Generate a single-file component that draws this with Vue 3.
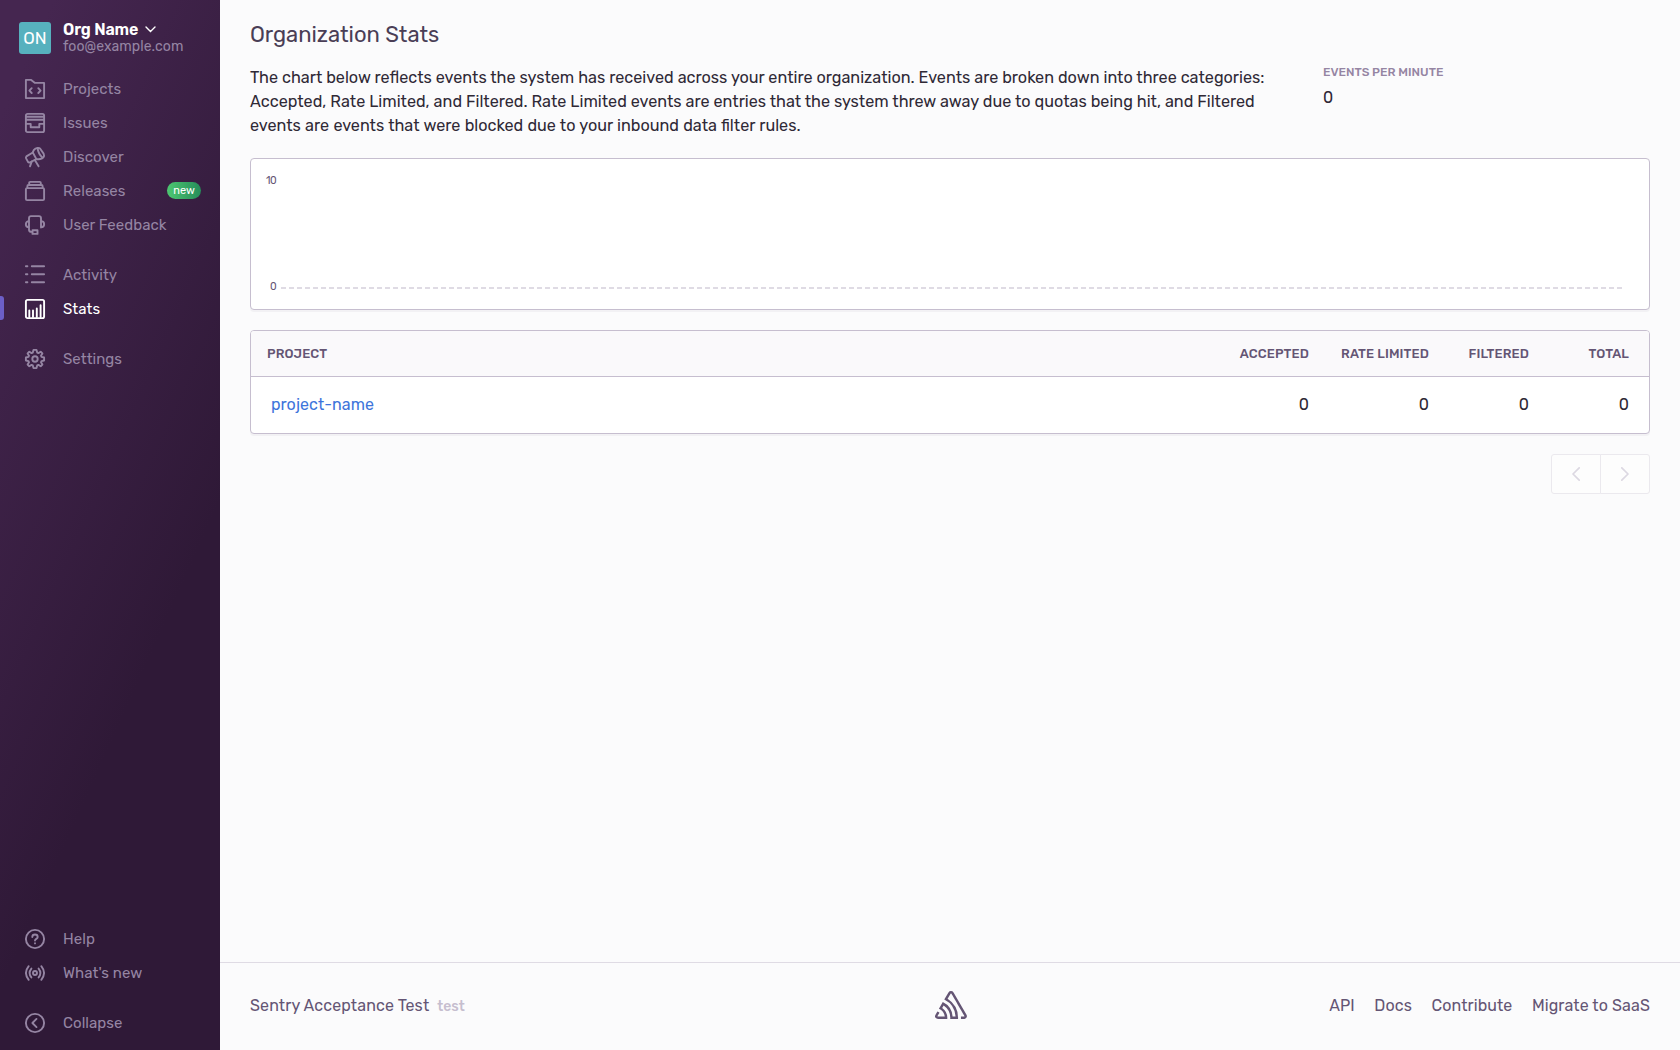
<script setup>
const primary = [
  { id: 'projects', label: 'Projects' },
  { id: 'issues', label: 'Issues' },
  { id: 'discover', label: 'Discover' },
  { id: 'releases', label: 'Releases', badge: 'new' },
  { id: 'feedback', label: 'User Feedback' },
]
const secondary = [
  { id: 'activity', label: 'Activity' },
  { id: 'stats', label: 'Stats', active: true },
]
const settings = [{ id: 'settings', label: 'Settings' }]
const support = [
  { id: 'help', label: 'Help' },
  { id: 'whatsnew', label: "What's new" },
]
const collapse = [{ id: 'collapse', label: 'Collapse' }]
const topGroups = [primary, secondary, settings]
const bottomGroups = [support, collapse]

const icons = {
  projects:
    '<path d="M.9.9H6.2L10 3.9H19.1V19.1H.9Z"/><path d="M6.7 9.2 4.4 11.6 6.7 14M13.3 9.2l2.3 2.4L13.3 14"/>',
  issues:
    '<rect x=".9" y=".9" width="18.2" height="18.2" rx="1.6"/><path d="M.9 3.7H19.1M.9 6.7H19.1M.9 10.9H5.7V14.3H14.3V10.9H19.1"/>',
  discover:
    '<path d="M1.4 9.4 7.8 5.5 11.4 12.1 4.7 15.5Q3.6 15.8 3 14.9L1.1 11.4Q.6 10.2 1.4 9.4Z"/><path d="M7.8 5.5Q8.4 2.6 10.4 1.6L12.6.9Q14.2.6 15.2 1.7L18.6 6.6Q19.6 8.6 18.5 10.2L17 11.4Q14.8 12.7 11.4 12.1M12.6.9Q13 6.4 17.6 10.9M6.8 14.4 5 19.3M9.8 13 13.6 19.3"/>',
  releases:
    '<rect x=".9" y="7.1" width="18.2" height="12" rx="1.2"/><path d="M2.4 7V5Q2.4 4 3.4 4H16.6Q17.6 4 17.6 5V7M4.2 4V1.9Q4.2.9 5.2.9H14.8Q15.8.9 15.8 1.9V4"/>',
  feedback:
    '<path d="M4 12.6V3.3Q4 1.1 6 1.1H14Q16 1.1 16 3.3V12.6M4 6.1C-.2 6.1-.2 12.3 4 12.3ZM16 6.1C20.2 6.1 20.2 12.3 16 12.3ZM4 12.3V14.5Q4 16.9 6.3 16.9H7.3"/><rect x="7.5" y="15.3" width="5" height="3.6"/>',
  activity: '<path d="M.9 1.2H2.4M6.8 1.2H19.1M.9 9.2H2.4M6.8 9.2H19.1M.9 17.2H2.4M6.8 17.2H19.1"/>',
  stats:
    '<rect x=".9" y=".9" width="18.2" height="18.2" rx="1.6"/><path d="M4.3 18V11.4M8 18V11.4M11.8 18V9.5M15.6 18V6.2"/>',
  settings:
    '<circle cx="10" cy="10" r="2.7"/><path d="M8.5.9H11.5L12.2 3.6 13.4 4.1 15.7 2.7 17.4 4.4 16 6.7 16.5 7.9 19.1 8.5V11.5L16.5 12.1 16 13.3 17.4 15.6 15.7 17.3 13.4 15.9 12.2 16.4 11.5 19.1H8.5L7.8 16.4 6.6 15.9 4.3 17.3 2.6 15.6 4 13.3 3.5 12.1.9 11.5V8.5L3.5 7.9 4 6.7 2.6 4.4 4.3 2.7 6.6 4.1 7.8 3.6Z"/>',
  help:
    '<circle cx="10" cy="10" r="9.1"/><path d="M7.3 8Q7.3 5.5 10 5.5T12.7 8C12.7 10 10 9.8 10 11.6"/><path d="M10 14.3V14.4"/>',
  whatsnew:
    '<circle cx="10" cy="10" r="2"/><path d="M6.4 5.6Q2.8 10 6.4 14.4M13.6 5.6Q17.2 10 13.6 14.4M3.7 3.2Q-1.8 10 3.7 16.8M16.3 3.2Q21.8 10 16.3 16.8"/>',
  collapse: '<circle cx="10" cy="10" r="9.1"/><path d="M11.5 5.9 7.4 10 11.5 14.1"/>',
}

const columns = ['Accepted', 'Rate Limited', 'Filtered', 'Total']
const rows = [{ name: 'project-name', values: [0, 0, 0, 0] }]
const links = ['API', 'Docs', 'Contribute', 'Migrate to SaaS']
</script>

<template>
  <div class="app">
    <aside class="sidebar">
      <div class="org">
        <div class="avatar">ON</div>
        <div class="org-text">
          <div class="org-name">
            <span>Org Name</span>
            <svg width="11" height="7" viewBox="0 0 11 7"><path d="M1 1 5.5 5.5 10 1" /></svg>
          </div>
          <div class="org-mail">foo@example.com</div>
        </div>
      </div>
      <nav class="nav">
        <div v-for="(group, g) in topGroups" :key="g" class="group">
          <a v-for="item in group" :key="item.id" class="item" :class="{ active: item.active }">
            <svg class="icon" viewBox="0 0 20 20" v-html="icons[item.id]"></svg>
            <span class="label">{{ item.label }}</span>
            <span v-if="item.badge" class="badge">{{ item.badge }}</span>
          </a>
        </div>
      </nav>
      <nav class="nav bottom">
        <div v-for="(group, g) in bottomGroups" :key="g" class="group">
          <a v-for="item in group" :key="item.id" class="item">
            <svg class="icon" viewBox="0 0 20 20" v-html="icons[item.id]"></svg>
            <span class="label">{{ item.label }}</span>
          </a>
        </div>
      </nav>
    </aside>

    <div class="page">
      <main class="content">
        <h1>Organization Stats</h1>
        <div class="intro">
          <p>
            <span>The chart below reflects events the system has received across your entire organization. Events are broken down into three categories:</span><br />
            <span>Accepted, Rate Limited, and Filtered. Rate Limited events are entries that the system threw away due to quotas being hit, and Filtered</span><br />
            <span class="last">events are events that were blocked due to your inbound data filter rules.</span>
          </p>
          <div class="epm">
            <h6>Events per minute</h6>
            <div>0</div>
          </div>
        </div>

        <section class="panel chart">
          <div class="tick">10</div>
          <div class="baseline">
            <div class="tick">0</div>
            <div class="dashes"></div>
          </div>
        </section>

        <section class="panel table">
          <div class="row head">
            <div class="name">Project</div>
            <div v-for="(c, i) in columns" :key="c" class="cell" :class="'c' + i">{{ c }}</div>
          </div>
          <div v-for="r in rows" :key="r.name" class="row">
            <div class="name"><a>{{ r.name }}</a></div>
            <div v-for="(v, i) in r.values" :key="i" class="cell" :class="'c' + i">{{ v }}</div>
          </div>
        </section>

        <div class="pager">
          <button><svg width="8" height="14" viewBox="0 0 8 14"><path d="M7.2.8 1 7 7.2 13.2" /></svg></button>
          <button><svg width="8" height="14" viewBox="0 0 8 14"><path d="M.8.8 7 7 .8 13.2" /></svg></button>
        </div>
      </main>

      <footer>
        <div class="version">Sentry Acceptance Test<span class="build">test</span></div>
        <svg class="logo" viewBox="0 0 50 44">
          <path d="M29,2.26a4.67,4.67,0,0,0-8,0L14.42,13.53A32.21,32.21,0,0,1,32.17,40.19H27.55A27.68,27.68,0,0,0,12.09,17.47L6,28a15.92,15.92,0,0,1,9.23,12.17H4.62A.76.76,0,0,1,4,39.06l2.94-5a10.74,10.74,0,0,0-3.36-1.9l-2.91,5a4.54,4.54,0,0,0,1.69,6.24A4.66,4.66,0,0,0,4.62,44H19.15a19.4,19.4,0,0,0-8-17.31l2.31-4A23.87,23.87,0,0,1,23.76,44H36.07a35.88,35.88,0,0,0-16.41-31.8l4.67-8a.77.77,0,0,1,1.05-.27c.53.29,20.29,34.77,20.66,35.17a.76.76,0,0,1-.68,1.13H40.6q.09,1.91,0,3.81h4.78A4.59,4.59,0,0,0,50,39.43a4.49,4.49,0,0,0-.62-2.28Z" />
        </svg>
        <div class="links">
          <a v-for="l in links" :key="l">{{ l }}</a>
        </div>
      </footer>
    </div>
  </div>
</template>

<style>
body {
  margin: 0;
  background: #fbfbfc;
}
</style>

<style scoped>
* {
  box-sizing: border-box;
}
.app {
  display: flex;
  height: 1050px;
  font-family: Rubik, Roboto, 'Liberation Sans', sans-serif;
  font-size: 16px;
  line-height: 24px;
  color: #2f2936;
  background: #fbfbfc;
}
.sidebar {
  display: flex;
  flex-direction: column;
  width: 220px;
  padding: 18px 19px 10px;
  color: #9585a3;
  background: linear-gradient(294.17deg, #2f1937 35.57%, #452650 92.42%, #452650 92.42%);
}
.org {
  display: flex;
  height: 54px;
  padding-top: 4px;
}
.avatar {
  width: 32px;
  height: 32px;
  margin-right: 12px;
  border-radius: 3px;
  color: #fff;
  background: #57b1be;
  font-size: 17px;
  line-height: 32px;
  text-align: center;
}
.org-text {
  white-space: nowrap;
}
.org-name {
  display: flex;
  align-items: center;
  gap: 7px;
  height: 16px;
  color: #fff;
  font-weight: 600;
  letter-spacing: -0.12px;
}
.org-name svg {
  margin-top: -2px;
  fill: none;
  stroke: #fff;
  stroke-width: 1.4;
  stroke-linecap: round;
}
.org-mail {
  margin-top: 1px;
  font-size: 14px;
  line-height: 16px;
  letter-spacing: 0.06px;
}
.group + .group {
  margin-top: 16px;
}
.bottom {
  margin-top: auto;
}
.item {
  position: relative;
  display: flex;
  align-items: center;
  height: 34px;
  padding-left: 6px;
  font-size: 15px;
}
.icon {
  width: 20px;
  height: 20px;
  margin-right: 18px;
  fill: none;
  stroke: currentColor;
  stroke-width: 1.9;
  stroke-linecap: round;
  stroke-linejoin: round;
  overflow: visible;
}
.label {
  letter-spacing: 0.04px;
}
.active {
  color: #fff;
}
.active::before {
  content: '';
  position: absolute;
  left: -19px;
  top: 4px;
  width: 4px;
  height: 24px;
  border-radius: 0 3px 3px 0;
  background: #6c5fc7;
}
.badge {
  width: 34px;
  height: 17px;
  margin: 0 0 1px auto;
  border-radius: 9px;
  color: #fff;
  background: linear-gradient(90deg, #4dc771, #268d5a);
  font-size: 11px;
  line-height: 17px;
  text-align: center;
}
.page {
  display: flex;
  flex: 1;
  flex-direction: column;
}
.content {
  flex: 1;
  padding: 20px 30px 0;
}
h1 {
  height: 40px;
  margin: 0;
  color: #4a3e56;
  font-size: 22px;
  font-weight: 400;
  line-height: 30px;
  letter-spacing: -0.02px;
}
.intro {
  display: flex;
  height: 98px;
  padding-top: 5px;
}
p {
  width: 1073px;
  margin: 1px 0 0;
  font-size: 16.22px;
  white-space: nowrap;
}
.last {
  word-spacing: 0.3px;
}
h6 {
  margin: 0 0 7px;
  color: #9585a3;
  font-size: 12px;
  font-weight: 500;
  line-height: 14px;
  text-transform: uppercase;
}
.panel {
  border: 1px solid #c6becf;
  border-radius: 4px;
  background: #fff;
  box-shadow: 0 2px 0 rgba(37, 11, 54, 0.04);
}
.chart {
  height: 152px;
  padding: 16px 27px 0 12px;
}
.tick {
  width: 13px;
  color: #645574;
  font-size: 10.5px;
  line-height: 12px;
  letter-spacing: -0.6px;
  text-align: right;
}
.baseline {
  display: flex;
  align-items: center;
  gap: 5px;
  margin-top: 94px;
}
.dashes {
  flex: 1;
  height: 2px;
  margin-top: 1px;
  background: repeating-linear-gradient(90deg, #dfdbe4 0 5px, #fff 5px 8px);
}
.table {
  height: 104px;
  margin-top: 20px;
  overflow: hidden;
}
.row {
  display: flex;
  align-items: center;
  height: 56px;
  padding: 0 20px;
}
.head {
  height: 46px;
  padding-left: 16px;
  border-bottom: 1px solid #c6becf;
  color: #645574;
  background: #faf9fb;
  font-size: 13px;
  font-weight: 500;
  letter-spacing: 0.1px;
  text-transform: uppercase;
}
.name {
  flex: 1;
}
.name a {
  color: #3d74db;
  letter-spacing: 0.08px;
}
.cell {
  text-align: right;
}
.c0 {
  width: 110px;
}
.c1 {
  width: 120px;
}
.c2,
.c3 {
  width: 100px;
}
.pager {
  display: flex;
  justify-content: flex-end;
  margin-top: 20px;
}
.pager button {
  display: flex;
  align-items: center;
  justify-content: center;
  width: 50px;
  height: 40px;
  padding: 0;
  border: 1px solid #ebe9ee;
  border-radius: 3px 0 0 3px;
  background: #fdfdfd;
}
.pager button + button {
  margin-left: -1px;
  border-radius: 0 3px 3px 0;
}
.pager svg {
  fill: none;
  stroke: #dcd8e2;
  stroke-width: 1.7;
  stroke-linecap: round;
  stroke-linejoin: round;
}
footer {
  display: grid;
  grid-template-columns: 1fr 32px 1fr;
  align-items: center;
  height: 88px;
  padding: 0 30px;
  border-top: 1px solid #dfdbe4;
  color: #645574;
  letter-spacing: 0.12px;
}
.logo {
  width: 32px;
  height: 28px;
  margin: 0 -1px 3px 1px;
  fill: #645574;
}
.build {
  margin-left: 8px;
  color: #c6becf;
  font-size: 14px;
  font-weight: 500;
  letter-spacing: 0;
}
.links {
  display: flex;
  justify-content: flex-end;
  gap: 19.5px;
  margin-bottom: 2px;
  letter-spacing: 0.1px;
}
</style>
